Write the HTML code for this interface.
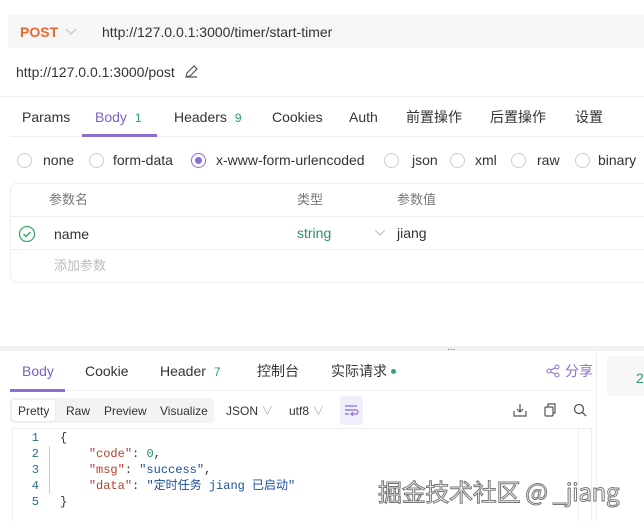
<!DOCTYPE html>
<html><head><meta charset="utf-8"><style>
*{margin:0;padding:0;box-sizing:border-box}
body{width:644px;height:521px;overflow:hidden;background:#fff;font-family:"Liberation Sans","Noto Sans CJK SC",sans-serif;font-size:14px;color:#333;position:relative}
.a{position:absolute;white-space:nowrap;line-height:16px}
.r{position:absolute;width:15px;height:15px;border:1px solid #ccc;border-radius:50%;top:153px}
.m{font-family:"Liberation Mono","Noto Sans CJK SC",monospace;font-size:12px}
.k{color:#b5402a}.s{color:#1a4f9c}.n{color:#1f8a70}
</style></head><body>
<div class="a" style="left:8px;top:15px;width:636px;height:33px;background:#f6f6f6;border-radius:4px 0 0 4px"></div>
<div class="a" style="left:20px;top:24px;color:#e8692d;font-weight:bold;font-size:14px">POST</div>
<svg class="a" style="left:65px;top:28px" width="12" height="8"><path d="M1 1l5 5 5-5" stroke="#bbb" fill="none"/></svg>
<div class="a" style="left:102px;top:24px;font-size:14px;color:#333">http://127.0.0.1:3000/timer/start-timer</div>
<div class="a" style="left:16px;top:64px;font-size:14px;color:#333">http://127.0.0.1:3000/post</div>
<svg class="a" style="left:184px;top:65px" width="14" height="14"><path d="M2 12l1-4 7-7 3 3-7 7z M3 12h10" stroke="#555" fill="none" stroke-width="1.2"/></svg>
<div class="a" style="left:0;top:96px;width:644px;height:1px;background:#eee"></div>
<div class="a" style="left:22px;top:109px">Params</div>
<div class="a" style="left:95px;top:109px;color:#7b5fc7">Body <span style="color:#2e9c6a;font-size:12px;margin-left:4px">1</span></div>
<div class="a" style="left:174px;top:109px">Headers <span style="color:#2e9c6a;font-size:12px;margin-left:4px">9</span></div>
<div class="a" style="left:272px;top:109px">Cookies</div>
<div class="a" style="left:349px;top:109px">Auth</div>
<div class="a" style="left:406px;top:109px">前置操作</div>
<div class="a" style="left:490px;top:109px">后置操作</div>
<div class="a" style="left:575px;top:109px">设置</div>
<div class="a" style="left:10px;top:136px;width:634px;height:1px;background:#eee"></div>
<div class="a" style="left:82px;top:134px;width:75px;height:3px;background:#8b6fd0"></div>
<div class="r" style="left:17px"></div><div class="a" style="left:43px;top:152px">none</div>
<div class="r" style="left:89px"></div><div class="a" style="left:113px;top:152px">form-data</div>
<div class="r" style="left:191px;border-color:#8b6fd0"></div><div class="a" style="left:195px;top:157px;width:7px;height:7px;border-radius:50%;background:#8b6fd0"></div><div class="a" style="left:216px;top:152px">x-www-form-urlencoded</div>
<div class="r" style="left:384px"></div><div class="a" style="left:412px;top:152px">json</div>
<div class="r" style="left:450px"></div><div class="a" style="left:475px;top:152px">xml</div>
<div class="r" style="left:511px"></div><div class="a" style="left:537px;top:152px">raw</div>
<div class="r" style="left:575px"></div><div class="a" style="left:598px;top:152px">binary</div>
<div class="a" style="left:10px;top:183px;width:640px;height:100px;border:1px solid #eee;border-radius:6px"></div>
<div class="a" style="left:10px;top:216px;width:634px;height:1px;background:#eee"></div>
<div class="a" style="left:10px;top:249px;width:634px;height:1px;background:#eee"></div>
<div class="a" style="left:49px;top:192px;color:#777;font-size:13px">参数名</div>
<div class="a" style="left:297px;top:192px;color:#777;font-size:13px">类型</div>
<div class="a" style="left:397px;top:192px;color:#777;font-size:13px">参数值</div>
<svg class="a" style="left:18px;top:225px" width="18" height="18"><circle cx="9" cy="9" r="7.5" stroke="#3aa86b" fill="none" stroke-width="1.3"/><path d="M5.5 9l2.5 2.5 4.5-4.5" stroke="#3aa86b" fill="none" stroke-width="1.5"/></svg>
<div class="a" style="left:54px;top:226px">name</div>
<div class="a" style="left:297px;top:225px;color:#2e8f63">string</div>
<svg class="a" style="left:374px;top:229px" width="12" height="8"><path d="M1 1l5 5 5-5" stroke="#bbb" fill="none"/></svg>
<div class="a" style="left:397px;top:225px">jiang</div>
<div class="a" style="left:54px;top:258px;color:#bbb;font-size:13px">添加参数</div>
<div class="a" style="left:0;top:346px;width:644px;height:5px;background:#f2f2f2"></div>
<div class="a" style="left:447px;top:340px;font-size:10px;color:#666">...</div>
<div class="a" style="left:596px;top:351px;width:1px;height:170px;background:#eee"></div>
<div class="a" style="left:607px;top:356px;width:40px;height:40px;background:#f7f7f7;border-radius:4px"></div>
<div class="a" style="left:636px;top:370px;color:#2e9c6a">2</div>
<div class="a" style="left:22px;top:363px;color:#7b5fc7">Body</div>
<div class="a" style="left:85px;top:363px">Cookie</div>
<div class="a" style="left:160px;top:363px">Header <span style="color:#2e9c6a;font-size:12px;margin-left:4px">7</span></div>
<div class="a" style="left:257px;top:363px">控制台</div>
<div class="a" style="left:331px;top:363px">实际请求</div>
<div class="a" style="left:391px;top:369px;width:5px;height:5px;border-radius:50%;background:#2ea86b"></div>
<svg class="a" style="left:546px;top:364px" width="14" height="14"><circle cx="11" cy="3" r="2" stroke="#8b6fd0" fill="none"/><circle cx="3" cy="7" r="2" stroke="#8b6fd0" fill="none"/><circle cx="11" cy="11" r="2" stroke="#8b6fd0" fill="none"/><path d="M5 6l4-2M5 8l4 2" stroke="#8b6fd0"/></svg>
<div class="a" style="left:565px;top:363px;color:#8b6fd0">分享</div>
<div class="a" style="left:10px;top:390px;width:582px;height:1px;background:#eee"></div>
<div class="a" style="left:10px;top:389px;width:55px;height:3px;background:#8b6fd0"></div>
<div class="a" style="left:10px;top:398px;width:204px;height:25px;background:#f3f3f3;border-radius:4px"></div>
<div class="a" style="left:12px;top:400px;width:43px;height:21px;background:#fff;border-radius:3px;box-shadow:0 0 2px #ddd"></div>
<div class="a" style="left:18px;top:403px;font-size:12px">Pretty</div>
<div class="a" style="left:66px;top:403px;font-size:12px">Raw</div>
<div class="a" style="left:104px;top:403px;font-size:12px">Preview</div>
<div class="a" style="left:160px;top:403px;font-size:12px">Visualize</div>
<div class="a" style="left:226px;top:403px;font-size:12px">JSON <span style="color:#bbb">∨</span></div>
<div class="a" style="left:289px;top:403px;font-size:12px">utf8 <span style="color:#bbb">∨</span></div>
<div class="a" style="left:340px;top:396px;width:23px;height:29px;background:#f1eefb;border-radius:4px"></div>
<svg class="a" style="left:344px;top:404px" width="15" height="13"><path d="M1 2h12M1 6h11a2 2 0 010 4H8M1 10h4M9 8l-2 2 2 2" stroke="#8b6fd0" fill="none" stroke-width="1.2"/></svg>
<svg class="a" style="left:513px;top:403px" width="14" height="14"><path d="M7 1v8M4 6l3 3 3-3M1 8v5h12V8" stroke="#555" fill="none" stroke-width="1.2"/></svg>
<svg class="a" style="left:543px;top:403px" width="14" height="14"><rect x="2" y="4" width="8" height="9" rx="1" stroke="#555" fill="none" stroke-width="1.2"/><path d="M5 4V1h7v9h-2" stroke="#555" fill="none" stroke-width="1.2"/></svg>
<svg class="a" style="left:573px;top:403px" width="14" height="14"><circle cx="6" cy="6" r="4.5" stroke="#555" fill="none" stroke-width="1.3"/><path d="M9.5 9.5l3.5 3.5" stroke="#555" stroke-width="1.3"/></svg>
<div class="a" style="left:12px;top:428px;width:580px;height:93px;border:1px solid #eee;border-bottom:none"></div>
<div class="a" style="left:578px;top:428px;width:1px;height:93px;background:#eee"></div>
<div class="a" style="left:49px;top:446px;width:1px;height:48px;background:#ccc"></div>
<div class="a m" style="left:30px;top:430px;line-height:16px;color:#2a6f8a;text-align:right;width:9px">1<br>2<br>3<br>4<br>5</div>
<div class="a m" style="left:60px;top:430px;line-height:16px;color:#333">{<br>&nbsp;&nbsp;&nbsp;&nbsp;<span class="k">"code"</span>: <span class="n">0</span>,<br>&nbsp;&nbsp;&nbsp;&nbsp;<span class="k">"msg"</span>: <span class="s">"success"</span>,<br>&nbsp;&nbsp;&nbsp;&nbsp;<span class="k">"data"</span>: <span class="s">"定时任务 jiang 已启动"</span><br>}</div>
<div class="a" style="left:378px;top:478px;font-size:24px;line-height:26px;color:#fff;-webkit-text-stroke:1px #777;font-family:'Noto Sans CJK SC',sans-serif;letter-spacing:-0.3px">掘金技术社区 @ _jiang</div>
</body></html>
